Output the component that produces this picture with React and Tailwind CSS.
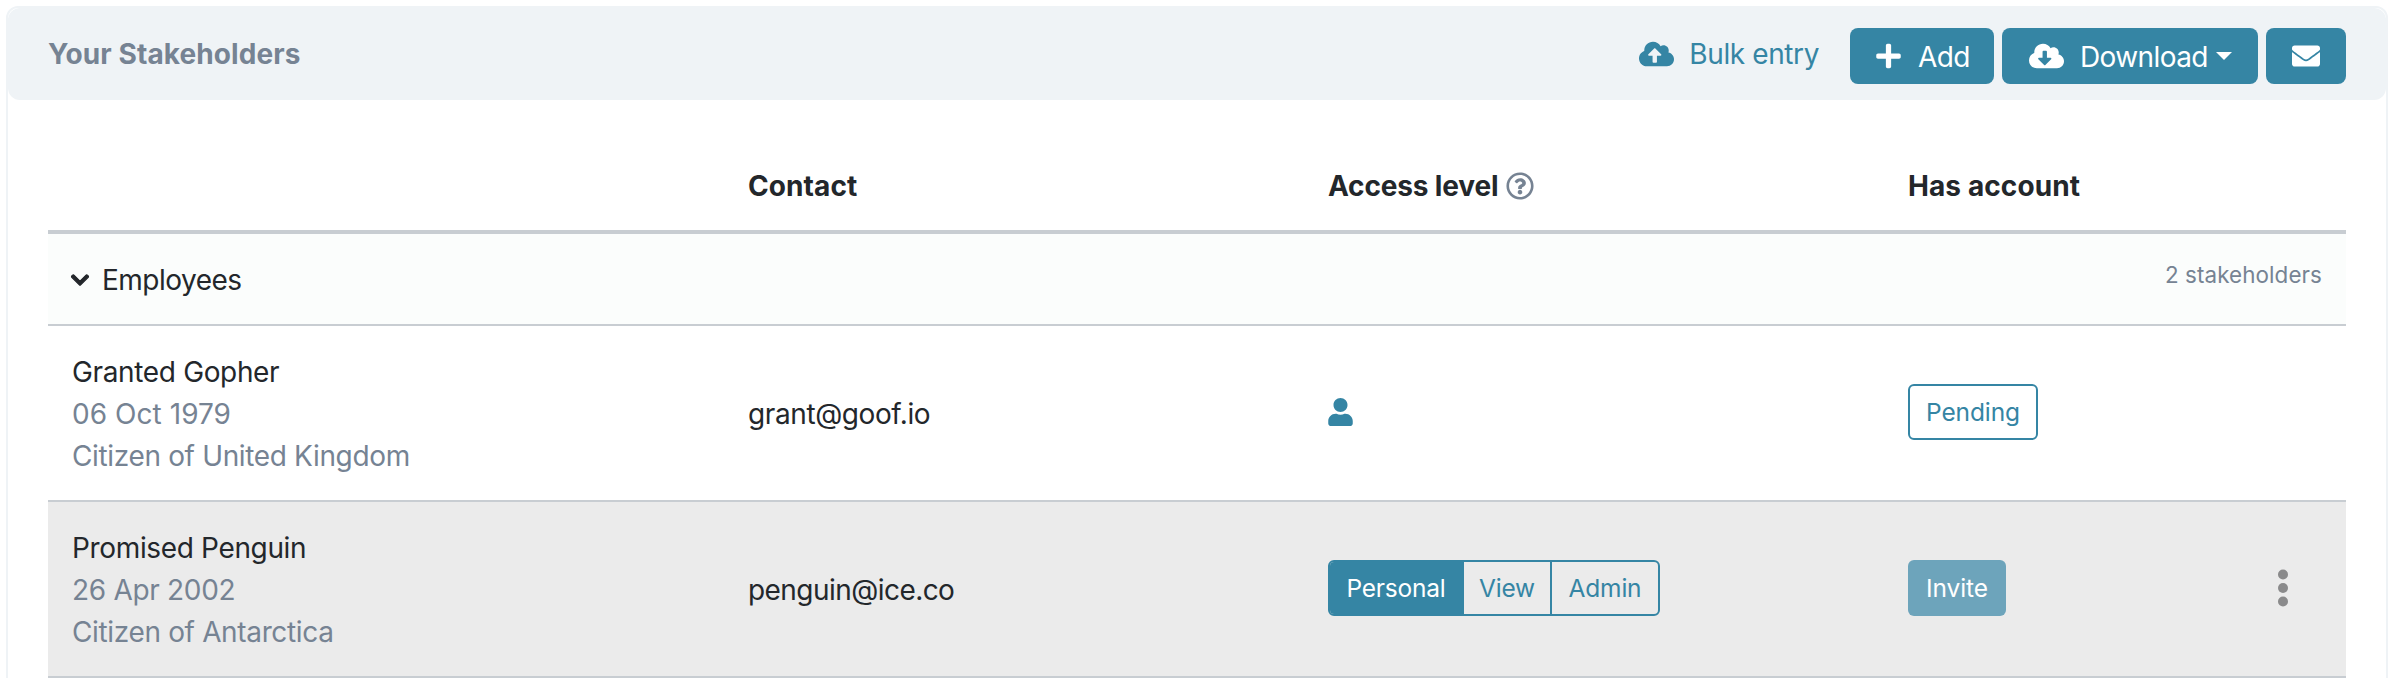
import { FaCloudUploadAlt, FaCloudDownloadAlt, FaPlus, FaEnvelope, FaUser, FaChevronDown, FaRegQuestionCircle } from "react-icons/fa";

const COLS = "grid grid-cols-[676px_580px_580px_1fr]";

function Person({ name, born, citizen, bornClass }) {
  return (
    <div className="flex flex-col px-6 pt-0.5">
      <span>{name}</span>
      <span className={bornClass + " text-[#768393]"}>{born}</span>
      <span className="text-[#768393]">{citizen}</span>
    </div>
  );
}

function Header() {
  return (
    <header className="flex h-[92px] items-center rounded-xl bg-[#eff3f6] px-10">
      <h1 className="mr-auto font-bold tracking-[0.1px] text-[#768393]">Your Stakeholders</h1>
      <a className="mr-[31px] flex items-center tracking-[-0.4px] text-[#3585a4]">
        <FaCloudUploadAlt className="mr-[15px] h-7 w-[35px]" />
        <span>Bulk entry</span>
      </a>
      <div className="flex gap-2 pt-1 tracking-[-0.6px] text-white">
        <button className="flex h-14 w-36 items-center rounded-lg bg-[#3585a4] pl-[26px]">
          <FaPlus className="mr-[17px] h-7 w-[25px]" />
          <span className="pt-px">Add</span>
        </button>
        <button className="flex h-14 w-64 items-center rounded-lg bg-[#3585a4] pl-[27px]">
          <FaCloudDownloadAlt className="mr-4 h-7 w-[35px]" />
          <span className="pt-px">Download</span>
          <svg className="ml-2 h-2 w-4" viewBox="0 0 16 8" fill="currentColor"><path d="M0 0h16L8 8z" /></svg>
        </button>
        <button className="flex h-14 w-20 items-center justify-center rounded-lg bg-[#3585a4]">
          <FaEnvelope className="size-7" />
        </button>
      </div>
    </header>
  );
}

export default function App() {
  return (
    <div className="h-[678px] overflow-hidden bg-white pl-1.5 pr-2.5 pt-1.5 font-['Inter',sans-serif] text-[28px] leading-[42px] tracking-[-0.35px] text-[#23272b]">
      <section className="h-[700px] rounded-xl border-2 border-[#eff3f6]">
        <Header />
        <div className="px-10 pt-[50px]">
          <div className={COLS + " h-[84px] border-b-4 border-[#c8cdd2] pt-[15px] font-bold tracking-[0.1px]"}>
            <span />
            <span className="px-6">Contact</span>
            <span className="flex px-6 tracking-[-0.15px]">
              Access level
              <FaRegQuestionCircle className="ml-2 mt-[7px] size-7 text-[#768393]" />
            </span>
            <span className="px-6">Has account</span>
          </div>
          <div className="flex h-[92px] justify-between border-b-2 border-[#c8cdd2] bg-[#fbfdfc] px-6 pt-6">
            <div className="flex pt-px">
              <FaChevronDown className="ml-[-2px] mr-3 mt-[11px] h-5 w-5" stroke="currentColor" strokeWidth="28" />
              <span className="tracking-[-0.5px]">Employees</span>
            </div>
            <span className="text-[22.4px] leading-[33px] tracking-[0.1px] text-[#768393]">2 stakeholders</span>
          </div>
          <div className={COLS + " h-44 items-center border-b-2 border-[#c8cdd2]"}>
            <Person name="Granted Gopher" born="06 Oct 1979" citizen="Citizen of United Kingdom" bornClass="tracking-[0.05px]" />
            <span className="px-6 pt-0.5 tracking-[-0.4px]">grant@goof.io</span>
            <span className="px-6"><FaUser className="mb-[3px] h-7 w-[25px] text-[#3585a4]" /></span>
            <div className="flex px-6 pb-0.5">
              <button className="flex h-14 w-[130px] items-center justify-center rounded-md border-2 border-[#3585a4] pb-px text-[24.5px] tracking-[-0.1px] text-[#3585a4]">Pending</button>
            </div>
          </div>
          <div className={COLS + " h-44 items-center border-b-2 border-[#c8cdd2] bg-[#ebebeb]"}>
            <Person name="Promised Penguin" born="26 Apr 2002" citizen="Citizen of Antarctica" bornClass="tracking-[-0.3px]" />
            <span className="px-6 pt-0.5 tracking-[-0.55px]">penguin@ice.co</span>
            <div className="px-6 pb-0.5">
              <div className="flex h-14 w-[332px] overflow-hidden rounded-md border-2 border-[#3585a4] text-[24.5px] tracking-[-0.2px] text-[#3585a4]">
                <button className="w-[134px] bg-[#3585a4] pb-px pr-0.5 text-white">Personal</button>
                <button className="w-[88px] border-r-2 border-[#3585a4] pb-px">View</button>
                <button className="flex-1 pb-px">Admin</button>
              </div>
            </div>
            <div className="flex items-center justify-between pb-0.5 pl-6 pr-[58px]">
              <button className="h-14 w-[98px] rounded-md bg-[#6da4bb] pb-px text-[24.5px] tracking-[-0.1px] text-white">Invite</button>
              <svg className="h-[38px] w-[10px]" viewBox="0 0 10 38" fill="#8a8a8b"><circle cx="5" cy="5.5" r="5" /><circle cx="5" cy="19" r="5" /><circle cx="5" cy="32.5" r="5" /></svg>
            </div>
          </div>
        </div>
      </section>
    </div>
  );
}
